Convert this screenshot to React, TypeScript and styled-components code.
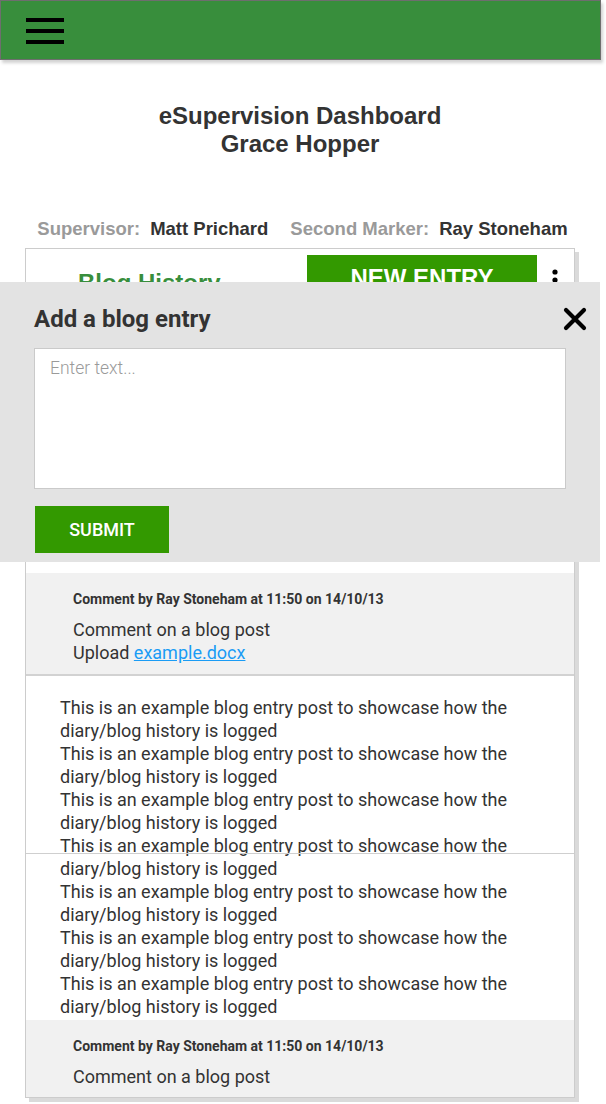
import React from "react";
import styled, { createGlobalStyle } from "styled-components";

const Global = createGlobalStyle`
  html, body { margin: 0; padding: 0; background: #fff; }
  body { font-family: "Liberation Sans", Arial, sans-serif; color: #333; }
  * { box-sizing: border-box; }
`;

const Page = styled.div`
  position: relative;
  width: 600px;
  padding-bottom: 6px;
`;

const TopBar = styled.header`
  height: 60px;
  width: 601px;
  background: #388e3c;
  border: 1px solid #6e6e6e;
  box-shadow: 2px 3px 3px rgba(0, 0, 0, 0.18);
  display: flex;
  align-items: center;
  padding-left: 25px;
`;

const MenuButton = styled.button`
  border: 0;
  background: none;
  padding: 0;
  width: 38px;
  height: 26px;
  display: flex;
  flex-direction: column;
  justify-content: space-between;
  margin-top: 1px;
  span {
    display: block;
    height: 4px;
    background: #000;
  }
`;

const TitleBlock = styled.h1`
  margin: 42px 0 0;
  text-align: center;
  font-family: "Liberation Sans", Arial, sans-serif;
  font-weight: bold;
  font-size: 24px;
  line-height: 28px;
  color: #333;
`;

const People = styled.div`
  margin-top: 59px;
  display: flex;
  justify-content: center;
  padding-left: 5px;
  font-family: "Liberation Sans", Arial, sans-serif;
  font-weight: bold;
  font-size: 18.5px;
  line-height: 24px;
`;

const Person = styled.div`
  display: flex;
  gap: 10px;
  & + & {
    margin-left: 22px;
  }
`;

const Label = styled.span`
  color: #9a9a9a;
`;

const Name = styled.span`
  color: #333;
`;

const Card = styled.section`
  margin: 7px 0 0 25px;
  width: 550px;
  border: 1px solid #ccc;
  box-shadow: 4px 4px 0 #dadada;
  background: #fff;
`;

const CardHeader = styled.div`
  height: 60px;
  display: flex;
  align-items: flex-start;
  padding-top: 6px;
`;

const CardTitle = styled.h2`
  margin: 14px 0 0 52px;
  width: 229px;
  font-family: "Liberation Sans", Arial, sans-serif;
  font-weight: bold;
  font-size: 24px;
  line-height: 28px;
  color: #388e3c;
`;

const NewEntry = styled.button`
  width: 230px;
  height: 46px;
  border: 0;
  background: #339900;
  color: #fff;
  font-family: "Liberation Sans", Arial, sans-serif;
  font-weight: bold;
  font-size: 24px;
  padding: 0;
`;

const MoreButton = styled.button`
  border: 0;
  background: none;
  padding: 0;
  margin: 13px 0 0 12px;
  width: 12px;
  height: 26px;
  display: flex;
  justify-content: center;
`;

const HiddenEntry = styled.div`
  height: 264px;
  overflow: hidden;
`;

const Comment = styled.div<{ $bottom: number }>`
  background: #f1f1f1;
  padding: ${(p) => `16px 40px ${p.$bottom}px 47px`};
  font-family: Roboto, "Noto Sans", sans-serif;
`;

const CommentMeta = styled.div`
  font-weight: bold;
  font-size: 14px;
  line-height: 20px;
  color: #333;
  margin-bottom: 9px;
`;

const CommentBody = styled.div`
  font-size: 18px;
  line-height: 23px;
  color: #333;
  a {
    color: #1a9cf5;
    text-decoration: underline;
  }
`;

const Entry = styled.div`
  position: relative;
  border-top: 2px solid #d2d2d2;
  padding: 20px 40px 2px 34px;
  font-family: Roboto, "Noto Sans", sans-serif;
  font-size: 18px;
  line-height: 23px;
  color: #333;
  &::after {
    content: "";
    position: absolute;
    left: 0;
    right: 0;
    top: 177px;
    height: 1px;
    background: #cfcfcf;
  }
  p {
    margin: 0;
  }
`;

const Modal = styled.div`
  position: absolute;
  left: 0;
  top: 282px;
  width: 600px;
  height: 280px;
  background: #e3e3e3;
  padding: 22px 34px 0 34px;
  font-family: Roboto, "Noto Sans", sans-serif;
`;

const ModalHead = styled.div`
  display: flex;
  justify-content: space-between;
  align-items: center;
  height: 30px;
`;

const ModalTitle = styled.h3`
  margin: 0;
  font-family: Roboto, "Noto Sans", sans-serif;
  font-weight: bold;
  font-size: 24px;
  color: #333;
`;

const CloseButton = styled.button`
  border: 0;
  background: none;
  padding: 0;
  margin-right: -21px;
  width: 24px;
  height: 24px;
  display: flex;
`;

const TextArea = styled.textarea`
  display: block;
  margin-top: 14px;
  width: 532px;
  height: 141px;
  border: 1px solid #cacaca;
  background: #fff;
  resize: none;
  padding: 9px 15px;
  font-family: Roboto, "Noto Sans", sans-serif;
  font-weight: 300;
  font-size: 17.5px;
  line-height: 20px;
  color: #333;
  &::placeholder {
    color: #9a9a9a;
  }
`;

const Submit = styled.button`
  margin: 17px 0 0 1px;
  width: 134px;
  height: 47px;
  border: 0;
  background: #339900;
  color: #fff;
  font-family: Roboto, "Noto Sans", sans-serif;
  font-weight: 500;
  font-size: 18px;
  padding: 0;
`;

const blogLine =
  "This is an example blog entry post to showcase how the diary/blog history is logged";

export default function App() {
  return (
    <Page>
      <Global />
      <TopBar>
        <MenuButton aria-label="menu">
          <span />
          <span />
          <span />
        </MenuButton>
      </TopBar>
      <TitleBlock>
        eSupervision Dashboard
        <br />
        Grace Hopper
      </TitleBlock>
      <People>
        <Person>
          <Label>Supervisor:</Label>
          <Name>Matt Prichard</Name>
        </Person>
        <Person>
          <Label>Second Marker:</Label>
          <Name>Ray Stoneham</Name>
        </Person>
      </People>
      <Card>
        <CardHeader>
          <CardTitle>Blog History</CardTitle>
          <NewEntry>NEW ENTRY</NewEntry>
          <MoreButton aria-label="more">
            <svg width="8" height="26" viewBox="0 0 8 26">
              <circle cx="4" cy="4" r="2.6" fill="#000" />
              <circle cx="4" cy="12" r="2.6" fill="#000" />
              <circle cx="4" cy="20" r="2.6" fill="#000" />
            </svg>
          </MoreButton>
        </CardHeader>
        <HiddenEntry />
        <Comment $bottom={10}>
          <CommentMeta>Comment by Ray Stoneham at 11:50 on 14/10/13</CommentMeta>
          <CommentBody>
            Comment on a blog post
            <br />
            Upload <a href="#">example.docx</a>
          </CommentBody>
        </Comment>
        <Entry>
          {Array.from({ length: 7 }).map((_, i) => (
            <p key={i}>{blogLine}</p>
          ))}
        </Entry>
        <Comment $bottom={9}>
          <CommentMeta>Comment by Ray Stoneham at 11:50 on 14/10/13</CommentMeta>
          <CommentBody>Comment on a blog post</CommentBody>
        </Comment>
      </Card>
      <Modal>
        <ModalHead>
          <ModalTitle>Add a blog entry</ModalTitle>
          <CloseButton aria-label="close">
            <svg width="24" height="24" viewBox="0 0 24 24">
              <path
                d="M3 3 L21 21 M21 3 L3 21"
                stroke="#000"
                strokeWidth="4.2"
                strokeLinecap="round"
              />
            </svg>
          </CloseButton>
        </ModalHead>
        <TextArea placeholder="Enter text..." />
        <Submit>SUBMIT</Submit>
      </Modal>
    </Page>
  );
}
